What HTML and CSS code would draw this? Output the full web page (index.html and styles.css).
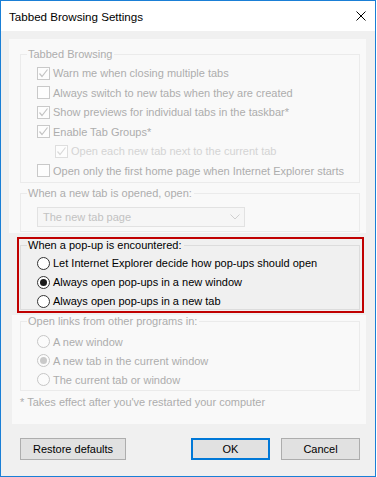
FILE: index.html
```html
<!DOCTYPE html>
<html>
<head>
<meta charset="utf-8">
<link rel="stylesheet" href="styles.css">
</head>
<body>
<div class="window">
  <div class="titlebar">
    <span class="title">Tabbed Browsing Settings</span>
    <svg class="close" width="10" height="10" viewBox="0 0 10 10"><path d="M0.5 0.5L9.5 9.5M9.5 0.5L0.5 9.5" stroke="#000" stroke-width="1" fill="none"/></svg>
  </div>
  <div class="content">
    <div class="panel panel-top">
      <fieldset class="group faded g1">
        <legend>Tabbed Browsing</legend>
        <div class="row"><span class="cb"><svg width="11" height="11" viewBox="0 0 11 11"><path d="M1.5 5.5L4 8.5L9.5 1.5" stroke="#c4c4c4" stroke-width="1.2" fill="none"/></svg></span>Warn me when closing multiple tabs</div>
        <div class="row"><span class="cb"></span>Always switch to new tabs when they are created</div>
        <div class="row"><span class="cb"><svg width="11" height="11" viewBox="0 0 11 11"><path d="M1.5 5.5L4 8.5L9.5 1.5" stroke="#c4c4c4" stroke-width="1.2" fill="none"/></svg></span>Show previews for individual tabs in the taskbar*</div>
        <div class="row"><span class="cb"><svg width="11" height="11" viewBox="0 0 11 11"><path d="M1.5 5.5L4 8.5L9.5 1.5" stroke="#c4c4c4" stroke-width="1.2" fill="none"/></svg></span>Enable Tab Groups*</div>
        <div class="row indent lighter"><span class="cb"><svg width="11" height="11" viewBox="0 0 11 11"><path d="M1.5 5.5L4 8.5L9.5 1.5" stroke="#dadada" stroke-width="1.2" fill="none"/></svg></span>Open each new tab next to the current tab</div>
        <div class="row"><span class="cb"></span>Open only the first home page when Internet Explorer starts</div>
      </fieldset>
      <fieldset class="group faded g2">
        <legend>When a new tab is opened, open:</legend>
        <div class="select"><span>The new tab page</span><svg width="10" height="6" viewBox="0 0 10 6"><path d="M0.5 0.5L5 5L9.5 0.5" stroke="#cfcfcf" stroke-width="1" fill="none"/></svg></div>
      </fieldset>
    </div>
    <div class="highlight">
      <fieldset class="group active g3">
        <legend>When a pop-up is encountered:</legend>
        <div class="row"><span class="rb"></span>Let Internet Explorer decide how pop-ups should open</div>
        <div class="row"><span class="rb on"></span>Always open pop-ups in a new window</div>
        <div class="row"><span class="rb"></span>Always open pop-ups in a new tab</div>
      </fieldset>
    </div>
    <div class="panel panel-bottom">
      <fieldset class="group faded g4">
        <legend>Open links from other programs in:</legend>
        <div class="row"><span class="rb"></span>A new window</div>
        <div class="row"><span class="rb on"></span>A new tab in the current window</div>
        <div class="row"><span class="rb"></span>The current tab or window</div>
      </fieldset>
      <div class="note">* Takes effect after you've restarted your computer</div>
    </div>
    <div class="buttons">
      <button class="btn restore">Restore defaults</button>
      <button class="btn ok">OK</button>
      <button class="btn cancel">Cancel</button>
    </div>
  </div>
</div>
</body>
</html>
```
FILE: styles.css
```css
html, body {
  margin: 0;
  padding: 0;
  background: #ffffff;
}
body {
  font-family: "Liberation Sans", Arial, sans-serif;
  font-size: 11px;
  color: #000;
}
.window {
  width: 376px;
  height: 477px;
  box-sizing: border-box;
  border: 1px solid #1a7fd6;
  background: #f0f0f0;
  display: flex;
  flex-direction: column;
}
.titlebar {
  height: 30px;
  flex: none;
  background: #fff;
  display: flex;
  align-items: center;
  justify-content: space-between;
  padding: 0 9px 0 8px;
}
.title {
  font-size: 11.6px;
  color: #000;
}
.close {
  display: block;
}
.content {
  display: flex;
  flex-direction: column;
}
.panel {
  background: #f9f9f9;
  box-sizing: border-box;
}
.panel-top {
  margin: 8px 0 0 8px;
  width: 357px;
  padding: 9px 0 1px 11px;
}
.panel-bottom {
  margin: 2px 0 0 11px;
  width: 354px;
  padding: 0 0 15px 8px;
}
.group {
  margin: 0;
  width: 340px;
  box-sizing: border-box;
  padding: 0 0 0 6px;
  display: flex;
  flex-direction: column;
  min-width: 0;
}
.group legend {
  padding: 0 2px 0 1px;
  line-height: 13px;
}
.faded {
  border: 1px solid #ebebeb;
  color: #adadad;
}
.active {
  border: 1px solid #dcdcdc;
  color: #000;
}
.row {
  height: 16px;
  display: flex;
  align-items: center;
  margin-left: 10px;
  white-space: nowrap;
}
.g1 {
  padding-bottom: 3px;
}
.g1 .row {
  margin-top: 3.6px;
}
.g1 .row:first-of-type {
  margin-top: 4px;
}
.row.indent {
  margin-left: 28px;
}
.row.lighter {
  color: #d4d4d4;
}
.cb {
  width: 13px;
  height: 13px;
  box-sizing: border-box;
  border: 1px solid #c9c9c9;
  background: #fdfdfd;
  margin-right: 3px;
  flex: none;
  display: flex;
  align-items: center;
  justify-content: center;
}
.lighter .cb {
  border-color: #dedede;
}
.cb svg {
  display: block;
}
.g2 {
  margin-top: 4px;
  padding-bottom: 4px;
}
.select {
  margin: 7px 0 0 10px;
  width: 208px;
  height: 20px;
  box-sizing: border-box;
  border: 1px solid #e2e2e2;
  background: #f6f6f6;
  color: #c2c2c2;
  display: flex;
  align-items: center;
  justify-content: space-between;
  padding: 0 4px 0 5px;
}
.select svg {
  display: block;
}
.highlight {
  margin: 4px 0 0 16px;
  width: 347px;
  box-sizing: border-box;
  border: 2px solid #c00000;
  padding: 0 2px 1px 1px;
}
.g3 {
  padding-bottom: 0;
}
.g3 .row, .g4 .row {
  margin-top: 3px;
}
.g3 .row:first-of-type {
  margin-top: 3.5px;
}
.g4 {
  padding-bottom: 2px;
}
.g4 .row:first-of-type {
  margin-top: 5.5px;
}
.rb {
  width: 13px;
  height: 13px;
  box-sizing: border-box;
  border: 1px solid #333;
  border-radius: 50%;
  background: #fff;
  margin-right: 3px;
  flex: none;
  display: flex;
  align-items: center;
  justify-content: center;
}
.rb.on::after {
  content: "";
  width: 7px;
  height: 7px;
  border-radius: 50%;
  background: #1a1a1a;
}
.faded .rb {
  border-color: #c6c6c6;
  background: #fbfbfb;
}
.faded .rb.on::after {
  background: #c9c9c9;
}
.note {
  margin-top: 5.5px;
  color: #adadad;
  line-height: 13px;
}
.buttons {
  margin-top: 14px;
  padding-left: 19px;
  display: flex;
}
.btn {
  height: 22px;
  box-sizing: border-box;
  background: #e1e1e1;
  border: 1px solid #adadad;
  font-family: "Liberation Sans", Arial, sans-serif;
  font-size: 11px;
  color: #000;
  padding: 0;
  margin: 0;
}
.restore {
  width: 106px;
}
.ok {
  width: 79px;
  margin-left: 65px;
  border: 2px solid #0078d7;
}
.cancel {
  width: 79px;
  margin-left: 11px;
}
```
